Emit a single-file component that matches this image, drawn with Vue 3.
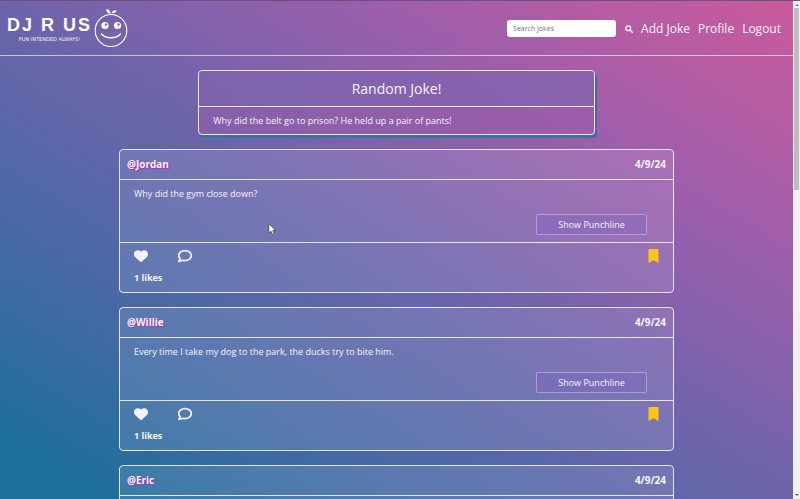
<script setup>
const jokes = [
  { user: '@Jordan', date: '4/9/24', text: 'Why did the gym close down?', likes: 1 },
  { user: '@Willie', date: '4/9/24', text: 'Every time I take my dog to the park, the ducks try to bite him.', likes: 1 },
  { user: '@Eric', date: '4/9/24', text: '', likes: 1 },
]
</script>

<template>
  <div class="shell">
    <div class="page">
      <header class="topbar">
        <a class="brand" href="#" aria-label="DJ R US home">
          <span class="brand-text">
            <span class="brand-name">DJ R US</span>
            <span class="brand-tag">PUN INTENDED ALWAYS!</span>
          </span>
          <svg class="face" viewBox="0 0 34 40" aria-hidden="true">
            <ellipse cx="17" cy="22.500" rx="15.800" ry="16" fill="none" stroke="#fff" stroke-width="1.1" />
            <path d="M16.500 5.800C16.200 2.800 14.500 1 12.300 1c-.2 2.600 1.500 4.600 4.200 4.800ZM17.500 5.300c.6-2.300 2.800-3.300 5.300-3-.8 2-2.600 3.200-5.300 3Z" fill="#fff" />
            <circle cx="11" cy="17.500" r="3.600" fill="#fff" />
            <circle cx="23.500" cy="17.500" r="3.600" fill="#fff" />
            <circle cx="12" cy="16.500" r="1.200" fill="#6f64ac" />
            <circle cx="24.500" cy="16.500" r="1.200" fill="#6f64ac" />
            <path d="M7.500 26c4.500 5 14.500 5 19 0" fill="none" stroke="#fff" stroke-width="1.300" stroke-linecap="round" />
          </svg>
        </a>
        <nav class="nav">
          <form class="search" @submit.prevent>
            <input type="search" placeholder="Search jokes" aria-label="Search jokes" />
            <button type="submit" aria-label="Search">
              <svg viewBox="0 0 16 16" aria-hidden="true">
                <circle cx="6.500" cy="6.500" r="4.800" fill="none" stroke="#fff" stroke-width="2.400" />
                <path d="M10.300 10.300 14.500 14.500" stroke="#fff" stroke-width="2.600" stroke-linecap="round" />
              </svg>
            </button>
          </form>
          <a href="#">Add Joke</a>
          <a href="#">Profile</a>
          <a href="#">Logout</a>
        </nav>
      </header>

      <main class="feed">
        <section class="random">
          <h1>Random Joke!</h1>
          <p>Why did the belt go to prison? He held up a pair of pants!</p>
        </section>

        <article v-for="joke in jokes" :key="joke.user" class="card">
          <header class="card-head">
            <a href="#" class="user">{{ joke.user }}</a>
            <time>{{ joke.date }}</time>
          </header>
          <div class="card-body">
            <template v-if="joke.text">
              <p>{{ joke.text }}</p>
              <button type="button" class="punch">Show Punchline</button>
            </template>
          </div>
          <footer v-if="joke.text" class="card-foot">
            <div class="actions">
              <button type="button" class="icon" aria-label="Like">
                <svg viewBox="0 0 512 512" aria-hidden="true">
                  <path fill="#f4f2fb" d="M47.600 300.400 228.300 469.100c7.500 7 17.400 10.900 27.700 10.900s20.200-3.900 27.700-10.900L464.400 300.400c30.400-28.300 47.600-68 47.600-109.500v-5.800c0-69.900-50.500-129.500-119.400-141C347 36.500 300.600 51.400 268 84l-12 12-12-12c-32.600-32.600-79-47.500-124.600-39.900C50.500 55.600 0 115.200 0 185.100v5.800c0 41.500 17.200 81.200 47.600 109.500z" />
                </svg>
              </button>
              <button type="button" class="icon" aria-label="Comment">
                <svg viewBox="0 0 512 512" aria-hidden="true">
                  <path fill="none" stroke="#f4f2fb" stroke-width="62" stroke-linejoin="round" d="M256 57C134 57 26 138 26 240c0 43 19 83 51 114-4 38-22 68-47 98 46 0 89-16 124-43 32 11 66 17 102 17 127 0 230-83 230-186S383 57 256 57Z" />
                </svg>
              </button>
              <button type="button" class="icon save" aria-label="Bookmark">
                <svg viewBox="0 0 384 512" aria-hidden="true">
                  <path fill="#fcc419" d="M8 36C8 12 16 4 40 4h304c24 0 32 8 32 32v472L192 408 8 508Z" />
                </svg>
              </button>
            </div>
            <strong>{{ joke.likes }} likes</strong>
          </footer>
        </article>
      </main>

      <svg class="cursor" viewBox="0 0 12 18" aria-hidden="true">
        <path d="M1 1v13l3-2.700 2.200 4.900 2.200-1L6.300 10.500h4.200Z" fill="#fff" stroke="#222" stroke-width=".8" />
      </svg>
    </div>
    <div class="scrollbar" aria-hidden="true">
      <span class="arrow up"></span>
      <span class="thumb"></span>
      <span class="arrow down"></span>
    </div>
  </div>
</template>

<style>
body {
  margin: 0;
}
</style>

<style scoped>
* {
  box-sizing: border-box;
}
.shell {
  display: flex;
  height: 100vh;
  overflow: hidden;
  border-top: 1px solid #6b5080;
  color: #f6f3fc;
  font: 9px/14px "Open Sans", "Noto Sans", sans-serif;
}
.page {
  position: relative;
  flex: 1;
  min-width: 0;
  overflow: hidden;
  background: linear-gradient(to top right, #1b6f99 5%, #4969a5 28%, #6d64ab 50%, #a05eab 75%, #cb5a9b 100%);
}
a {
  color: inherit;
  text-decoration: none;
}
button {
  padding: 0;
  border: 0;
  background: none;
  color: inherit;
  font: inherit;
}
svg {
  display: block;
}
.topbar {
  display: flex;
  align-items: center;
  justify-content: space-between;
  height: 55px;
  padding: 0 12px 0 7px;
  border-bottom: 1px solid rgba(255, 255, 255, 0.6);
}
.brand {
  display: flex;
  align-items: center;
  gap: 2px;
}
.brand-text {
  display: flex;
  flex-direction: column;
  align-items: center;
  gap: 1px;
}
.brand-name {
  font: bold 18px/20px "Liberation Sans", sans-serif;
  letter-spacing: 2px;
  color: #fff;
}
.brand-tag {
  font: 5px/6px "DejaVu Sans", sans-serif;
}
.face {
  width: 34px;
  height: 40px;
}
.nav {
  display: flex;
  align-items: center;
  gap: 8px;
  padding-top: 1px;
  font-size: 12px;
}
.search {
  display: flex;
  align-items: center;
  gap: 9px;
}
.search input {
  width: 109px;
  height: 17px;
  padding: 0 6px;
  border: 0;
  border-radius: 3px;
  background: #fff;
  font: 7px "Open Sans", sans-serif;
}
.search input::placeholder {
  color: #6c757d;
}
.search svg {
  width: 8px;
  height: 8px;
}
.feed {
  display: flex;
  flex-direction: column;
  align-items: center;
  gap: 14px;
  padding-top: 14px;
}
.random {
  width: 50%;
  border: 1px solid #ece8f8;
  border-radius: 4px;
  background: rgba(155, 92, 170, 0.5);
  box-shadow: 2px 3px 0 #3c6ea8;
}
.random h1 {
  margin: 0;
  padding: 8px 0;
  border-bottom: 1px solid #ece8f8;
  border-radius: 3px 3px 0 0;
  background: rgba(110, 104, 180, 0.45);
  font-size: 14px;
  font-weight: 400;
  line-height: 19px;
  text-align: center;
}
.random p {
  margin: 0;
  padding: 7px 14px 6px;
}
.card {
  width: 70%;
  border: 1px solid #e6e4f6;
  border-radius: 4px;
  background: rgba(240, 240, 255, 0.12);
}
.card-head {
  display: flex;
  align-items: center;
  justify-content: space-between;
  height: 30px;
  padding: 0 7px 1px;
  border-bottom: 1px solid #e6e4f6;
  font-size: 10px;
  font-weight: 700;
}
.user {
  text-shadow: 1px 1px 1px #c026b8;
}
.card-body {
  display: flex;
  flex-direction: column;
  justify-content: space-between;
  height: 63px;
  padding: 7px 26px 7px 14px;
  border-bottom: 1px solid #e6e4f6;
}
.card-body p {
  margin: 0;
}
.punch {
  align-self: flex-end;
  width: 111px;
  height: 21px;
  border: 1px solid rgba(225, 200, 245, 0.5);
  border-radius: 2px;
  background: rgba(125, 95, 200, 0.3);
}
.card-foot {
  display: flex;
  flex-direction: column;
  gap: 8px;
  padding: 6px 14px 7px;
}
.actions {
  display: flex;
  gap: 30px;
}
.icon svg {
  width: 14px;
  height: 14px;
}
.save {
  margin-left: auto;
}
.save svg {
  width: 11px;
}
.cursor {
  position: absolute;
  top: 222px;
  left: 268px;
  width: 9px;
  height: 13px;
}
.scrollbar {
  display: flex;
  flex-direction: column;
  align-items: center;
  width: 7px;
  padding: 3px 0;
  background: #f1f1f1;
}
.thumb {
  width: 5px;
  height: 37%;
  margin-top: 2px;
  background: #bdbdbd;
}
.arrow {
  border: 2px solid transparent;
}
.up {
  border-top: 0;
  border-bottom-color: #777;
}
.down {
  margin-top: auto;
  border-bottom: 0;
  border-top-color: #555;
}
</style>
